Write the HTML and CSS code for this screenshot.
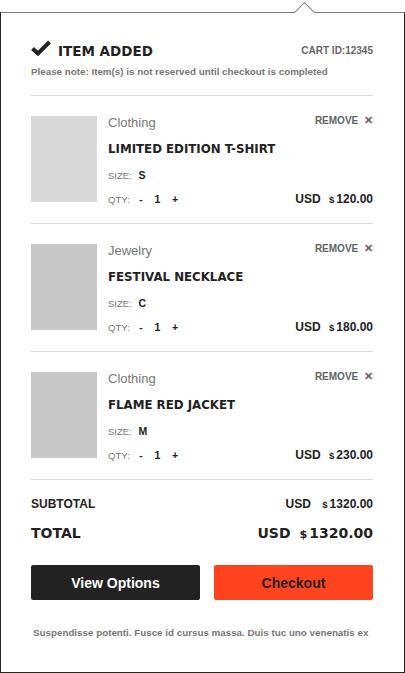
FILE: index.html
```html
<!DOCTYPE html>
<html lang="en">
<head>
    <meta charset="UTF-8">
    <meta name="viewport" content="width=device-width, initial-scale=1.0">
    <title>Item Added</title>
    <link rel="stylesheet" href="styles.css">
</head>
<body>
    <div class="panel">
        <div class="head">
            <div class="head-title">
                <svg class="check" viewBox="0 0 20 16" width="20" height="16"><path d="M1.5 8.5 L7 13.5 L18.5 2" fill="none" stroke="#222" stroke-width="4"/></svg>
                <h1>ITEM ADDED</h1>
            </div>
            <span class="cart-id">CART ID:12345</span>
        </div>
        <p class="note">Please note: Item(s) is not reserved until checkout is completed</p>

        <div class="items">
            <div class="item">
                <div class="thumb light"></div>
                <div class="info">
                    <div class="row top">
                        <span class="cat">Clothing</span>
                        <span class="remove">REMOVE <span class="x">&#10005;</span></span>
                    </div>
                    <div class="name">LIMITED EDITION T-SHIRT</div>
                    <div class="size">SIZE: <b>S</b></div>
                    <div class="row bottom">
                        <span class="qty">QTY: <b>-</b> <b>1</b> <b>+</b></span>
                        <span class="price">USD <span class="cur">$</span>120.00</span>
                    </div>
                </div>
            </div>
            <div class="item">
                <div class="thumb"></div>
                <div class="info">
                    <div class="row top">
                        <span class="cat">Jewelry</span>
                        <span class="remove">REMOVE <span class="x">&#10005;</span></span>
                    </div>
                    <div class="name">FESTIVAL NECKLACE</div>
                    <div class="size">SIZE: <b>C</b></div>
                    <div class="row bottom">
                        <span class="qty">QTY: <b>-</b> <b>1</b> <b>+</b></span>
                        <span class="price">USD <span class="cur">$</span>180.00</span>
                    </div>
                </div>
            </div>
            <div class="item">
                <div class="thumb"></div>
                <div class="info">
                    <div class="row top">
                        <span class="cat">Clothing</span>
                        <span class="remove">REMOVE <span class="x">&#10005;</span></span>
                    </div>
                    <div class="name">FLAME RED JACKET</div>
                    <div class="size">SIZE: <b>M</b></div>
                    <div class="row bottom">
                        <span class="qty">QTY: <b>-</b> <b>1</b> <b>+</b></span>
                        <span class="price">USD <span class="cur">$</span>230.00</span>
                    </div>
                </div>
            </div>
        </div>

        <div class="totals">
            <div class="line sub">
                <span>SUBTOTAL</span>
                <span>USD <span class="cur">$</span>1320.00</span>
            </div>
            <div class="line total">
                <span>TOTAL</span>
                <span>USD <span class="cur">$</span>1320.00</span>
            </div>
        </div>

        <div class="actions">
            <a href="#" class="btn dark">View Options</a>
            <a href="#" class="btn orange">Checkout</a>
        </div>

        <p class="foot">Suspendisse potenti. Fusce id cursus massa. Duis tuc uno venenatis ex</p>
    </div>
</body>
</html>
```

FILE: styles.css
```css
body {
    margin: 0;
    padding: 0;
    background: #fff;
    color: #222;
    font-family: 'Liberation Sans', Arial, sans-serif;
}
.panel {
    position: relative;
    box-sizing: border-box;
    width: 405px;
    height: 661px;
    margin-top: 12px;
    padding: 26px 31px 0 30px;
    border: 1px solid #222;
    border-top-color: #7a7a7a;
    background: #fff;
}
.panel::before {
    content: "";
    position: absolute;
    top: -8px;
    left: 296px;
    width: 14px;
    height: 14px;
    background: #fff;
    border-top: 1px solid #7a7a7a;
    border-left: 1px solid #7a7a7a;
    transform: rotate(45deg);
}
.head {
    display: flex;
    justify-content: space-between;
    align-items: center;
    height: 20px;
}
.head-title {
    display: flex;
    align-items: center;
    gap: 7px;
}
.check {
    display: block;
    margin-top: -3px;
}
h1 {
    margin: 0;
    padding-top: 3px;
    font-family: 'DejaVu Sans', sans-serif;
    font-size: 13.5px;
    font-weight: bold;
}
.cart-id {
    font-size: 10px;
    font-weight: bold;
    color: #666;
    margin-top: 3px;
}
.note {
    margin: 7px 0 0 0;
    font-size: 9.8px;
    font-weight: bold;
    color: #777;
    line-height: 12px;
}
.items {
    margin-top: 17px;
    border-top: 1px solid #ddd;
}
.item {
    display: flex;
    align-items: flex-start;
    gap: 11px;
    padding: 20px 0 21px 0;
    border-bottom: 1px solid #ddd;
}
.thumb {
    width: 66px;
    height: 86px;
    flex: none;
    background: #c8c8c8;
}
.thumb.light {
    background: #d9d9d9;
}
.info {
    flex: 1;
    height: 86px;
    margin-top: -1px;
}
.row {
    display: flex;
    justify-content: space-between;
    align-items: center;
}
.row.top {
    height: 14px;
}
.cat {
    font-size: 13px;
    color: #777;
}
.remove {
    font-size: 10px;
    font-weight: bold;
    color: #666;
    margin-top: -4px;
}
.remove .x {
    margin-left: 3px;
    font-size: 11px;
}
.name {
    margin-top: 13px;
    font-family: 'DejaVu Sans', sans-serif;
    font-size: 11.8px;
    font-weight: bold;
    line-height: 14px;
}
.size {
    margin-top: 12px;
    font-size: 9.5px;
    line-height: 14px;
    color: #777;
}
.size b {
    font-size: 10.5px;
    color: #222;
    margin-left: 4px;
}
.row.bottom {
    margin-top: 9px;
    height: 14px;
}
.qty {
    font-size: 9.5px;
    color: #777;
}
.qty b {
    font-size: 10.5px;
    color: #222;
    margin-left: 7px;
}
.qty b + b {
    margin-left: 9px;
}
.price {
    font-size: 12px;
    font-weight: bold;
}
.cur {
    font-size: 0.8em;
    margin-left: 5px;
    margin-right: 2px;
}
.totals {
    padding-top: 16px;
}
.line {
    display: flex;
    justify-content: space-between;
    align-items: center;
}
.line.sub {
    height: 16px;
    font-size: 12px;
    font-weight: bold;
}
.line.sub .cur {
    margin-left: 8px;
}
.line.total {
    margin-top: 12px;
    height: 18px;
    font-family: 'DejaVu Sans', sans-serif;
    font-size: 14px;
    font-weight: bold;
}
.line.total .cur {
    margin-left: 4px;
}
.actions {
    display: flex;
    gap: 14px;
    margin-top: 23px;
}
.btn {
    display: flex;
    align-items: center;
    justify-content: center;
    height: 35px;
    border-radius: 2px;
    font-size: 14px;
    font-weight: bold;
    text-decoration: none;
}
.btn.dark {
    width: 169px;
    background: #222;
    color: #fff;
}
.btn.orange {
    flex: 1;
    background: #ff4321;
    color: #222;
}
.foot {
    margin: 27px 0 0 2px;
    font-size: 9.8px;
    font-weight: bold;
    color: #777;
    line-height: 12px;
}
```
